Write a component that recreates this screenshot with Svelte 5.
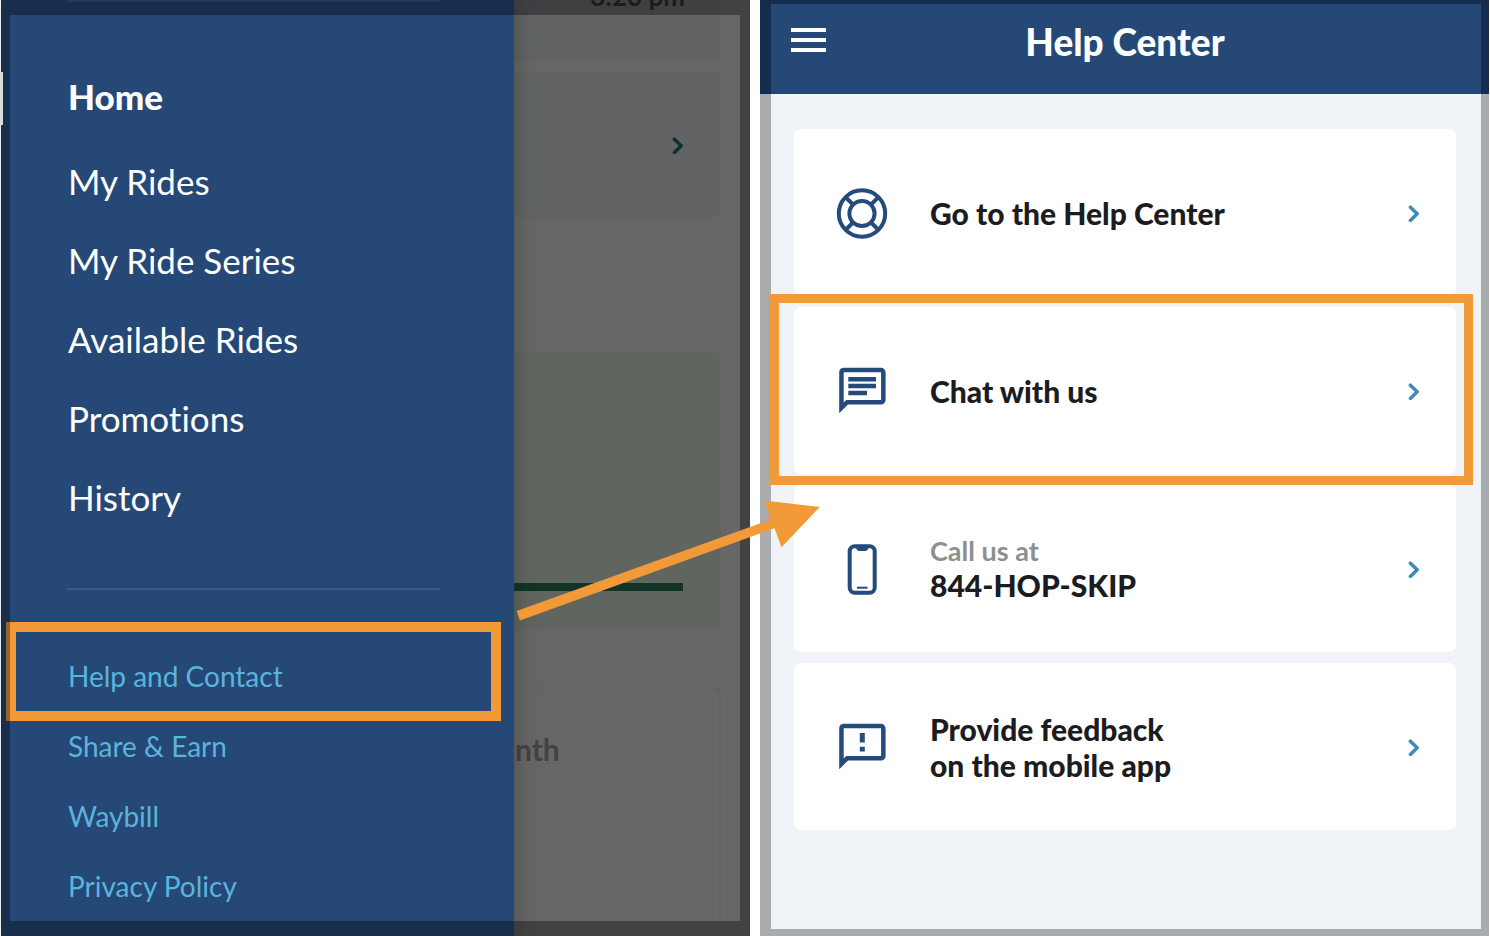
<!--
  Two phone screens side by side: the open navigation drawer and the Help
  Center it leads to, with callouts on the entries to tap.
-->
<script lang="ts">
	type Icon = 'buoy' | 'chat' | 'phone' | 'feedback';

	interface HelpOption {
		icon: Icon;
		lines: string[];
		caption?: string;
		marked?: boolean;
	}

	const primary = ['Home', 'My Rides', 'My Ride Series', 'Available Rides', 'Promotions', 'History'];
	const secondary = ['Help and Contact', 'Share & Earn', 'Waybill', 'Privacy Policy'];

	const options: HelpOption[] = [
		{ icon: 'buoy', lines: ['Go to the Help Center'] },
		{ icon: 'chat', lines: ['Chat with us'], marked: true },
		{ icon: 'phone', lines: ['844-HOP-SKIP'], caption: 'Call us at' },
		{ icon: 'feedback', lines: ['Provide feedback', 'on the mobile app'] }
	];

	let current = $state('Home');
</script>

{#snippet chevron()}
	<svg class="chevron" viewBox="0 0 12 18" aria-hidden="true">
		<path d="M2.4 3.2 9.2 9.800l-6.8 6.600" />
	</svg>
{/snippet}

{#snippet optionIcon(name: Icon)}
	<svg class="icon" viewBox="0 0 52 52" aria-hidden="true">
		{#if name === 'buoy'}
			<circle cx="26" cy="26.500" r="23.2" />
			<circle cx="26" cy="26.500" r="12.6" />
			<path d="m9.8 10.300 7.2 7.2M42.2 10.300 35 17.500M9.8 42.700 17 35.500M42.2 42.700 35 35.500" />
		{:else if name === 'phone'}
			<rect x="13.7" y="3.200" width="25" height="46.6" rx="5" />
			<path class="solid" d="M20 3.500h12.500v1.500q-1 3-3.500 3h-5.500q-2.500 0-3.500-3z" />
			<path class="thin" d="M21 44.700h10.500" />
		{:else}
			<g transform="translate(0 -1.5)">
				<path
					class="solid"
					fill-rule="evenodd"
					d="M7.500 4.300h37.500a4.600 4.600 0 0 1 4.600 4.600v27.600a4.600 4.600 0 0 1-4.600 4.600H12L3.200 49.700V8.900a4.600 4.600 0 0 1 4.300-4.600zM7.700 8.700v30.200l2.500-2.300h34.900V8.700z"
				/>
				{#if name === 'chat'}
					<path class="lines" d="M12.300 15.800h27.700M12.300 22.600h27.700M12.300 29.500h18.700" />
				{:else}
					<path class="thick" d="M26.300 13.500v9.500M26.300 27.300v4.700" />
				{/if}
			</g>
		{/if}
	</svg>
{/snippet}

<main class="stage">
	<section class="phone menu-phone" aria-label="Menu">
		<div class="ride-page">
			<div class="tile time-tile">3:20 pm</div>
			<div class="tile ride-tile">{@render chevron()}</div>
			<div class="tile green-tile"><div class="progress"></div></div>
			<div class="month-tile">nth</div>
		</div>

		<nav class="drawer">
			<hr />
			<ul class="primary">
				{#each primary as item}
					<li>
						<a href="#menu" class:current={item === current} onclick={() => (current = item)}>{item}</a>
					</li>
				{/each}
			</ul>
			<hr />
			<ul class="secondary">
				{#each secondary as item, i}
					<li class:marked={i === 0}><a href="#menu">{item}</a></li>
				{/each}
			</ul>
		</nav>
		<div class="rim"></div>
		<div class="side-button"></div>
	</section>

	<section class="phone help-phone" aria-label="Help Center">
		<header>
			<button type="button" class="burger" aria-label="Open menu">
				<span></span><span></span><span></span>
			</button>
			<h1>Help Center</h1>
		</header>
		<div class="options">
			{#each options as option}
				<a href="#help" class="option" class:marked={option.marked}>
					{@render optionIcon(option.icon)}
					<span class="label">
						{#if option.caption}<small>{option.caption}</small>{/if}
						{#each option.lines as line}<span>{line}</span>{/each}
					</span>
					{@render chevron()}
				</a>
			{/each}
		</div>
	</section>

	<svg class="arrow" viewBox="517 500 303 122" aria-hidden="true">
		<path d="M516.700 611 770.500 519.600 764.700 500.500 819.700 507 781.500 547.300 774.500 528.300 520 620.400z" />
	</svg>
</main>

<style>
	:global(body) {
		margin: 0;
		background: #fff;
	}
	.stage {
		--navy: #254877;
		--orange: #f29a38;
		position: relative;
		display: grid;
		grid-template-columns: 749fr 729fr;
		gap: 10px;
		min-height: 100vh;
		padding: 0 1px;
		box-sizing: border-box;
		font-family: Lato, 'Open Sans', sans-serif;
		font-variant-ligatures: none;
	}
	a {
		color: inherit;
		text-decoration: none;
	}
	ul {
		margin: 0;
		padding: 0;
		list-style: none;
	}
	.phone {
		position: relative;
		display: flex;
		flex-direction: column;
		min-width: 0;
	}

	/* dimmed page behind the drawer */
	.menu-phone {
		background: #666;
	}
	.ride-page {
		position: absolute;
		inset: 0;
		display: flex;
		flex-direction: column;
		padding-right: 29px;
		overflow: hidden;
	}
	.tile {
		display: flex;
		justify-content: flex-end;
		border-radius: 0 8px 8px 0;
		background: #626365;
	}
	.time-tile {
		height: 81px;
		margin-top: -20px;
		padding-right: 36px;
		box-sizing: border-box;
		color: #2b2c2e;
		font-size: 26px;
		font-weight: 700;
		line-height: 32px;
	}
	.ride-tile {
		align-items: center;
		height: 146px;
		margin-top: 11px;
		padding-right: 37px;
		color: #0f302f;
	}
	.green-tile {
		align-items: flex-end;
		height: 278px;
		margin-top: 134px;
		padding: 0 38px 39px 0;
		box-sizing: border-box;
		background: #60665f;
	}
	.progress {
		width: 100%;
		height: 8px;
		background: #123426;
	}
	.month-tile {
		flex: 1;
		margin-top: 57px;
		padding: 40px 0 0 512px;
		border: 2px solid #616363;
		border-bottom: 0;
		border-radius: 0 8px 0 0;
		color: #434343;
		font-size: 30px;
		font-weight: 700;
		line-height: 40px;
	}

	.drawer {
		position: relative;
		flex: 1;
		width: 68.5%;
		padding: 0 74px 14px 66px;
		box-sizing: border-box;
		background: var(--navy);
		box-shadow: 2px 0 20px rgb(0 0 0 / 0.22);
		color: #fff;
	}
	.drawer hr {
		height: 2px;
		margin: 0;
		border: 0;
		background: #3a5b86;
	}
	.primary {
		padding: 55px 0 51px 1px;
		font-size: 35px;
		line-height: 79px;
	}
	.primary li:first-child {
		margin-bottom: 6px;
	}
	.current {
		font-weight: 900;
	}
	.secondary {
		padding: 51px 0 0 1px;
		color: #5ab4dc;
		font-size: 28px;
		line-height: 70px;
	}
	.secondary li {
		position: relative;
	}
	.secondary .marked::after {
		content: '';
		position: absolute;
		inset: -19px -61px -10px -62px;
		border: 10px solid var(--orange);
	}
	.rim {
		position: absolute;
		inset: 0;
		border: solid rgb(0 0 0 / 0.35);
		border-width: 15px 10px 15px 9px;
		pointer-events: none;
	}
	.side-button {
		position: absolute;
		top: 72px;
		left: -1px;
		width: 3px;
		height: 53px;
		background: #dcdcdc;
	}

	/* Help Center */
	header {
		position: relative;
		display: flex;
		align-items: center;
		justify-content: center;
		height: 94px;
		box-sizing: border-box;
		border: solid #142d4f;
		border-width: 4px 8px 0 11px;
		background: var(--navy);
		color: #fff;
	}
	h1 {
		margin: 0;
		padding: 0 2px 14px 0;
		font-size: 37px;
		font-weight: 900;
		line-height: 44px;
	}
	.burger {
		position: absolute;
		top: 24px;
		left: 20px;
		display: flex;
		flex-direction: column;
		gap: 6px;
		padding: 0;
		border: 0;
		background: none;
	}
	.burger span {
		width: 35px;
		height: 4px;
		background: #fff;
	}
	.options {
		flex: 1;
		display: flex;
		flex-direction: column;
		gap: 11px;
		padding: 35px 25px 35px 23px;
		border: solid #a8acaf;
		border-width: 0 8px 7px 11px;
		background: #f0f4f9;
	}
	.option {
		position: relative;
		display: flex;
		align-items: center;
		gap: 42px;
		min-height: 167px;
		padding: 0 36px 0 42px;
		box-sizing: border-box;
		border-radius: 7px;
		background: #fff;
		color: #1c1c1e;
	}
	.option.marked {
		z-index: 1;
	}
	.option.marked::after {
		content: '';
		position: absolute;
		inset: -13px -17px -11px -24px;
		border: 9px solid var(--orange);
	}
	.label {
		flex: 1;
		display: flex;
		flex-direction: column;
		font-size: 30px;
		font-weight: 900;
		line-height: 36px;
	}
	.label small {
		color: #8e8e90;
		font-size: 27px;
		font-weight: 700;
		line-height: 32px;
	}
	.icon {
		width: 52px;
		height: 52px;
		fill: none;
		stroke: #254a7c;
		stroke-width: 4;
	}
	.icon .solid {
		fill: #254a7c;
		stroke: none;
	}
	.icon .thin {
		stroke-width: 2;
	}
	.icon .lines {
		stroke-width: 4.5;
	}
	.icon .thick {
		stroke-width: 5;
	}
	.chevron {
		width: 12px;
		height: 18px;
		fill: none;
		stroke: currentColor;
		stroke-width: 3.5;
		stroke-linecap: round;
		stroke-linejoin: round;
	}
	.option .chevron {
		color: #3f8bb5;
	}

	.arrow {
		position: absolute;
		top: 500px;
		left: 34.7%;
		z-index: 2;
		width: 303px;
		height: 122px;
		overflow: visible;
		fill: var(--orange);
		pointer-events: none;
	}
</style>
